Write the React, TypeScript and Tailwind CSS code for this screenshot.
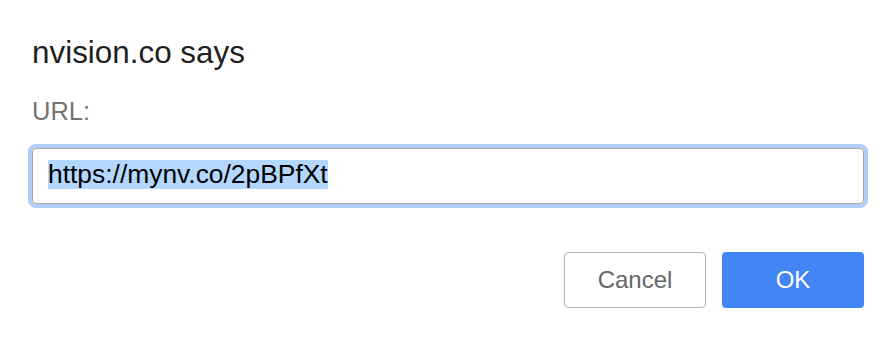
export default function App() {
  return (
    <div
      className="w-[896px] h-[338px] bg-white overflow-hidden px-[32px] pt-[35px]"
      style={{ fontFamily: '"Liberation Sans", Arial, sans-serif' }}
    >
      <div className="text-[31.4px] leading-[36px] text-[#1f1f1f]">nvision.co says</div>
      <div className="mt-[25px] text-[25.5px] leading-[30px] text-[#737373]">URL:</div>
      <div className="mt-[22px] h-[56px] w-[832px] rounded-[4px] border border-[#a6a6a6] ring-4 ring-[#b0cdf7] pl-[15px] pt-[11px]">
        <span className="bg-[#b3d7ff] text-[26.4px] leading-[29px] text-black inline-block">
          https://mynv.co/2pBPfXt
        </span>
      </div>
      <div className="mt-[48px] flex justify-end gap-[16px] w-[832px]">
        <button className="h-[56px] w-[142px] rounded-[4px] border border-[#b5b5b5] bg-white text-[24px] text-[#666666] flex items-center justify-center">
          Cancel
        </button>
        <button className="h-[56px] w-[142px] rounded-[4px] bg-[#4285f4] text-[24px] text-white flex items-center justify-center">
          OK
        </button>
      </div>
    </div>
  );
}
